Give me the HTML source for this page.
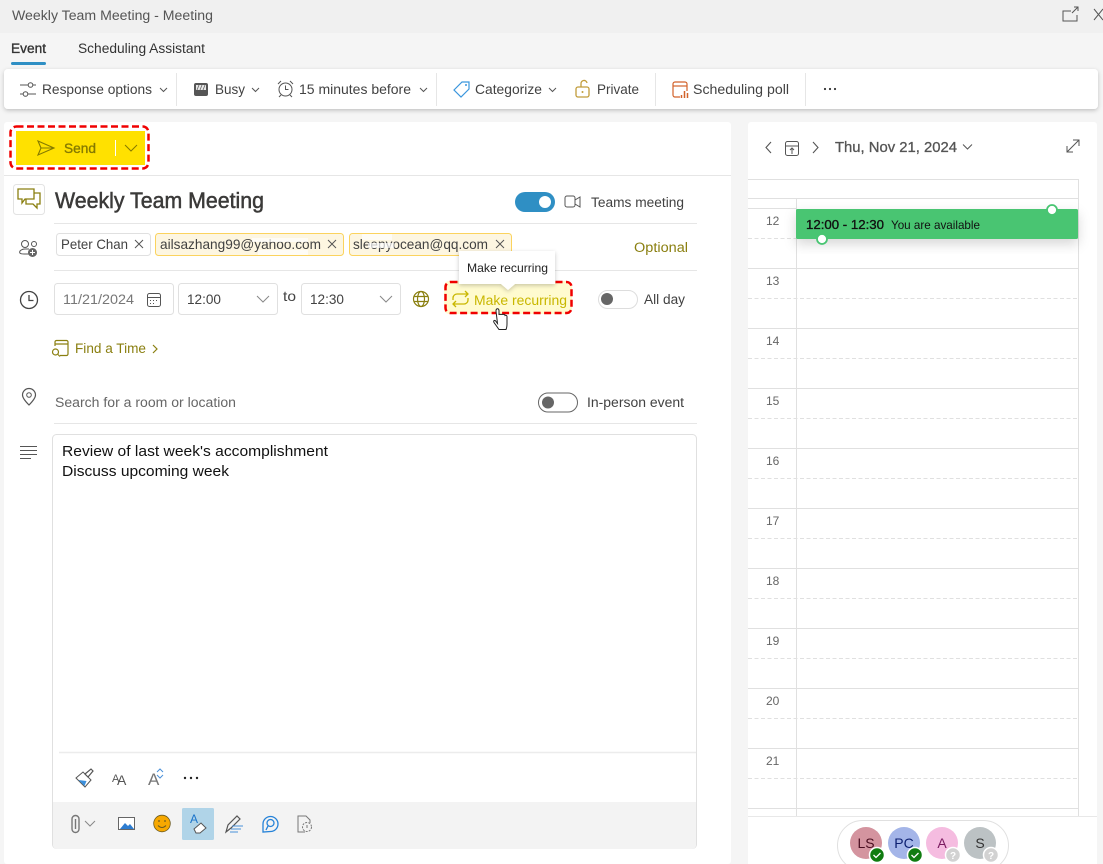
<!DOCTYPE html>
<html><head><meta charset="utf-8"><title>Weekly Team Meeting - Meeting</title>
<style>
html,body{margin:0;padding:0;background:#f5f5f5;width:1103px;height:864px;overflow:hidden}
svg{display:block}
text{font-family:"Liberation Sans",sans-serif;font-size:14px;fill:#424242;white-space:pre}
.i{fill:none;stroke:#555;stroke-width:1}
.o{fill:none;stroke:#8a7f10;stroke-width:1.200}
.l{stroke:#e6e6e6;stroke-width:1;fill:none}
.g{stroke:#e0e0e0;stroke-width:1;fill:#fff}
</style></head><body>
<svg width="1103" height="864" viewBox="0 0 1103 864" xmlns="http://www.w3.org/2000/svg">
<defs>
<filter id="s" x="-5%" y="-20%" width="110%" height="150%"><feDropShadow dx="0" dy="1.500" stdDeviation="2" flood-color="#000" flood-opacity=".22"/></filter>
<filter id="e" x="-5%" y="-30%" width="110%" height="180%"><feDropShadow dx="0" dy="5" stdDeviation="6" flood-color="#000" flood-opacity=".16"/></filter>
</defs>
<rect width="1103" height="864" fill="#f5f5f5"/>
<rect width="1103" height="33" fill="#f0f0f0"/>
<text x="12" y="20" textLength="201" lengthAdjust="spacingAndGlyphs" style="font-size:13.5px;fill:#555">Weekly Team Meeting - Meeting</text>
<path class="i" d="M1071 11h-8v10h14v-6M1072 13l6-6M1074 7h4v4"/>
<path class="i" d="M1094 9l9 11M1103 9l-9 11"/>

<text x="11" y="53" textLength="35" lengthAdjust="spacingAndGlyphs" style="font-size:13.5px;fill:#333;stroke:#333;stroke-width:.35px">Event</text>
<rect x="11" y="62" width="35" height="3" rx="1.500" fill="#2f8fc4"/>
<text x="78" y="53" textLength="127" lengthAdjust="spacingAndGlyphs" style="font-size:13.5px;fill:#333">Scheduling Assistant</text>

<!-- toolbar -->
<rect x="4" y="69" width="1094" height="40" rx="4" fill="#fff" filter="url(#s)"/>
<path class="i" d="M20 85h8M33 85h3M20 94h3M28 94h8"/><circle class="i" cx="30.500" cy="85" r="2.300"/><circle class="i" cx="25.500" cy="94" r="2.300"/>
<text x="42" y="94" textLength="110" lengthAdjust="spacingAndGlyphs">Response options</text>
<path class="i" d="M160 88l3.500 3.500L167 88" stroke="#888"/>
<path class="l" d="M176.500 73v33M436.500 73v33M655.500 73v33M805.500 73v33"/>
<rect x="194" y="83" width="14" height="13" rx="2" fill="#555"/><rect x="196" y="85" width="10" height="5" fill="#e8e8e8"/><path stroke="#666" stroke-width=".8" d="M197 90l2-5M200 90l2-5M203 90l2-5"/>
<text x="215" y="94" textLength="30" lengthAdjust="spacingAndGlyphs">Busy</text>
<path class="i" d="M252 88l3.500 3.500L259 88"/>
<circle class="i" cx="285.500" cy="89.500" r="6.500"/><path class="i" d="M285.500 85.500v4h3M278 84l3-3M293 84l-3-3M281 95l-2 2M290 95l2 2"/>
<text x="299" y="94" textLength="112" lengthAdjust="spacingAndGlyphs">15 minutes before</text>
<path class="i" d="M420 88l3.500 3.500L427 88"/>
<path fill="none" stroke="#3a96dd" stroke-width="1.200" d="M454 90l8-8h7v7l-8 8z"/><circle cx="466" cy="85" r="1" fill="#3a96dd"/>
<text x="475" y="94" textLength="67" lengthAdjust="spacingAndGlyphs">Categorize</text>
<path class="i" d="M549 88l3.500 3.500L556 88"/>
<rect x="576" y="87" width="13" height="10" rx="2" fill="none" stroke="#c19c3a" stroke-width="1.300"/><path fill="none" stroke="#c19c3a" stroke-width="1.300" d="M581 87v-3a3 3 0 0 1 6-1"/><circle cx="582.500" cy="92" r="1" fill="#c19c3a"/>
<text x="597" y="94" textLength="42" lengthAdjust="spacingAndGlyphs">Private</text>
<rect x="673" y="82" width="14" height="15" rx="2" fill="none" stroke="#d2622a" stroke-width="1.200"/><path stroke="#d2622a" stroke-width="1.200" d="M673 86h14"/>
<rect x="680" y="91" width="9" height="7" fill="#fff"/><path stroke="#d2622a" stroke-width="1.500" d="M681.500 98v-3M684.500 98v-7M687.500 98v-5"/>
<text x="693" y="94" textLength="96" lengthAdjust="spacingAndGlyphs">Scheduling poll</text>
<circle cx="825" cy="89" r="1.100" fill="#333"/><circle cx="830" cy="89" r="1.100" fill="#333"/><circle cx="835" cy="89" r="1.100" fill="#333"/>

<!-- left card -->
<rect x="4" y="122" width="727" height="742" rx="3" fill="#fff"/>
<rect x="16" y="131" width="129" height="34" fill="#ffe100"/>
<rect x="10.500" y="126.500" width="138" height="42" rx="6" fill="none" stroke="#f00000" stroke-width="2.500" stroke-dasharray="7 3.500"/>
<path fill="none" stroke="#857a00" stroke-width="1.100" d="M38 141l16 7-16 7 3-7zM41 148h13"/>
<text x="64" y="153" textLength="32" lengthAdjust="spacingAndGlyphs" style="fill:#857a00;font-size:13.5px;stroke:#857a00;stroke-width:.35px">Send</text>
<path stroke="#fff" stroke-width="1" d="M115.500 140v16"/>
<path fill="none" stroke="#857a00" d="M125 145l6 6 6-6"/>
<path class="l" d="M4 175.500h727"/>

<rect x="13.500" y="184.500" width="31" height="30" rx="3" fill="#fff" stroke="#e3e3e3"/>
<path fill="none" stroke="#8a7f10" stroke-width="1.300" d="M18 189h16v10h-9l-3 4v-4h-4zM34 193h6v11h-3v4l-4-4h-7v-5"/>
<text x="55" y="208" textLength="209" lengthAdjust="spacingAndGlyphs" style="font-size:22px;fill:#3b3a39;stroke:#3b3a39;stroke-width:.5px">Weekly Team Meeting</text>
<rect x="515" y="192" width="40" height="20" rx="10" fill="#2f8fc4"/><circle cx="545" cy="202" r="6" fill="#fff"/>
<rect x="565" y="196" width="10" height="11" rx="2" class="i"/><path class="i" d="M575 200l5-3v10l-5-3"/>
<text x="591" y="207" textLength="93" lengthAdjust="spacingAndGlyphs" style="font-size:13.5px">Teams meeting</text>
<path class="l" d="M54 223.500h643M54 270.500h643"/>

<!-- attendees -->
<circle class="i" cx="25" cy="244" r="3.500" stroke="#777"/><circle class="i" cx="34" cy="244" r="2.500" stroke="#777"/><path class="i" d="M32 254h-8c-4 0-5-1-4-3 1-1 2-2 5-2h4"/><circle cx="32.500" cy="252.500" r="4.500" fill="#666"/><path stroke="#fff" d="M30 252.500h5M32.500 250v5"/>
<rect x="56.500" y="233.500" width="94" height="22" rx="3" class="g"/>
<text x="61" y="249" textLength="67" lengthAdjust="spacingAndGlyphs">Peter Chan</text>
<path class="i" d="M135 240l8 8M143 240l-8 8"/>
<rect x="155.500" y="233.500" width="188" height="22" rx="3" fill="#fdf6e1" stroke="#fbd35e"/>
<text x="160" y="249" textLength="161" lengthAdjust="spacingAndGlyphs">ailsazhang99@yahoo.com</text>
<path class="i" d="M328 240l8 8M336 240l-8 8"/>
<rect x="349.500" y="233.500" width="162" height="22" rx="3" fill="#fdf6e1" stroke="#fbd35e"/>
<text x="353" y="249" textLength="135" lengthAdjust="spacingAndGlyphs">sleepyocean@qq.com</text>
<path class="i" d="M496 240l8 8M504 240l-8 8"/>
<g fill="#fff" opacity=".7"><rect x="252" y="238" width="56" height="4"/><rect x="258" y="250" width="50" height="5"/><rect x="362" y="234" width="30" height="6"/><rect x="368" y="243" width="26" height="5"/></g>
<text x="634" y="252" textLength="54" lengthAdjust="spacingAndGlyphs" style="fill:#8a7f10;font-size:13.5px">Optional</text>

<!-- date row -->
<circle cx="29" cy="300" r="8.500" fill="none" stroke="#444" stroke-width="1.300"/><path fill="none" stroke="#444" stroke-width="1.300" d="M29 295v5.500h4.500"/>
<rect x="54.500" y="283.500" width="119" height="31" rx="3" class="g"/>
<text x="63" y="304" textLength="71" lengthAdjust="spacingAndGlyphs" style="fill:#777">11/21/2024</text>
<rect x="147.500" y="293.500" width="13" height="13" rx="2" class="i"/><path class="i" d="M148 297.500h12"/><path stroke="#555" stroke-dasharray="1 2" d="M150 300.500h9M150 303.500h6"/>
<rect x="178.500" y="283.500" width="99" height="31" rx="3" class="g"/>
<text x="187" y="304" textLength="34" lengthAdjust="spacingAndGlyphs">12:00</text>
<path d="M257 296l6 6 6-6" fill="none" stroke="#888"/>
<text x="283" y="301" textLength="13" lengthAdjust="spacingAndGlyphs">to</text>
<rect x="301.500" y="283.500" width="99" height="31" rx="3" class="g"/>
<text x="310" y="304" textLength="34" lengthAdjust="spacingAndGlyphs">12:30</text>
<path d="M380 296l6 6 6-6" fill="none" stroke="#888"/>
<circle class="o" cx="421" cy="299" r="7.500"/><ellipse class="o" cx="421" cy="299" rx="3.500" ry="7.500"/><path class="o" d="M414 296.500h14M414 301.500h14"/>

<!-- tooltip + make recurring -->
<rect x="444" y="281" width="128" height="33" rx="5" fill="#fffbcf"/>
<rect x="445.500" y="282" width="126" height="31" rx="5" fill="none" stroke="#f00000" stroke-width="2.500" stroke-dasharray="7 3.500"/>
<path fill="none" stroke="#c9b700" stroke-width="1.300" d="M453 300v-2a4 4 0 0 1 4-4h11M465 291l3 3-3 3M468 298v2a4 4 0 0 1-4 4h-11M456 301l-3 3 3 3"/>
<text x="474" y="305" textLength="93" lengthAdjust="spacingAndGlyphs" style="fill:#c9b700;font-size:13.5px">Make recurring</text>
<g filter="url(#s)"><path fill="#fff" d="M459 251h96v33h-40l-7 6-7-6h-42z"/></g>
<text x="467" y="272" textLength="81" lengthAdjust="spacingAndGlyphs" style="font-size:12px;fill:#222">Make recurring</text>
<path fill="#fff" stroke="#222" stroke-width="1" d="M496 311c0-3 3-3 3 0v4c0-1 2-1 2 0 0-1 2-1 2 0 0-1 2-1 2 .5 1-.5 2 0 2 1v7c0 4-1 6-1 6h-7l-5-7c-1-2 1-3 2-1l1.500 2z"/>
<rect x="598.500" y="290.500" width="39" height="18" rx="9" fill="#fff" stroke="#ddd"/><circle cx="607" cy="299" r="6" fill="#666"/>
<text x="644" y="304" textLength="41" lengthAdjust="spacingAndGlyphs" style="font-size:13.5px">All day</text>

<!-- find a time -->
<path class="o" d="M55 346v-4a1.500 1.500 0 0 1 1.500-1.500h10a1.500 1.500 0 0 1 1.500 1.500v12a1.500 1.500 0 0 1-1.500 1.500H60M55 344h13"/><circle class="o" cx="55.500" cy="352" r="3"/><path class="o" d="M58 354.500l2 2"/>
<text x="75" y="353" textLength="71" lengthAdjust="spacingAndGlyphs" style="fill:#8a7f10;font-size:13.5px">Find a Time</text>
<path class="o" d="M153 345l4 4-4 4"/>

<!-- location -->
<path fill="none" stroke="#555" stroke-width="1.200" d="M29 405c-4-4-6.500-7-6.500-10a6.500 6.500 0 0 1 13 0c0 3-2.500 6-6.500 10z"/><circle class="i" cx="29" cy="395" r="2.300"/>
<text x="55" y="407" textLength="181" lengthAdjust="spacingAndGlyphs" style="fill:#666;font-size:13.5px">Search for a room or location</text>
<rect x="538.500" y="393" width="39" height="19" rx="9.500" fill="#fff" stroke="#666"/><circle cx="548" cy="402.500" r="6" fill="#666"/>
<text x="587" y="407" textLength="97" lengthAdjust="spacingAndGlyphs" style="font-size:13.5px">In-person event</text>
<path class="l" d="M54 423.500h643"/>

<!-- body -->
<path class="i" d="M20 446.500h17M20 450.500h17M20 454.500h17M20 458.500h11" stroke="#777" />
<rect x="52.500" y="434.500" width="644" height="414" rx="4" fill="#fff" stroke="#e0e0e0"/>
<text x="62" y="456" textLength="266" lengthAdjust="spacingAndGlyphs" style="fill:#111;font-size:15px">Review of last week's accomplishment</text>
<text x="62" y="476" textLength="167" lengthAdjust="spacingAndGlyphs" style="fill:#111;font-size:15px">Discuss upcoming week</text>
<path stroke="#ececec" stroke-width="1.500" d="M59 752.500h637"/>
<path d="M53 802h643v43a4 4 0 0 1-4 4H57a4 4 0 0 1-4-4z" fill="#f3f3f3"/>

<!-- format icons -->
<path fill="#fff" stroke="#555" d="M76 778l7-6 8 8-6 7z"/><path fill="#3a8fdc" d="M78.500 780l8 1-2 5z"/><path fill="#fff" stroke="#555" stroke-width="1.200" d="M85 774l6-5 2 2-5 6z"/>
<text x="112" y="782" style="font-size:11px;fill:#555">A</text><text x="117" y="785" style="font-size:14px;fill:#555">A</text>
<text x="148" y="785" style="font-size:17px;fill:#777">A</text>
<path fill="none" stroke="#4a90d9" d="M157 772l3-3 3 3M157 775l3 3 3-3"/>
<circle cx="185" cy="778" r="1.200" fill="#222"/><circle cx="191" cy="778" r="1.200" fill="#222"/><circle cx="197" cy="778" r="1.200" fill="#222"/>

<!-- bottom icons -->
<path fill="none" stroke="#777" stroke-width="1.400" d="M72 819a3.500 3.500 0 0 1 7 0v10a3.500 3.500 0 0 1-7 0zM75.500 819v10"/>
<path fill="none" stroke="#888" d="M85 821l5 5 5-5"/>
<rect x="118.500" y="817.500" width="16" height="12" fill="#fff" stroke="#666"/><path fill="#2d7cd0" d="M120 829l5-6 3 3 2-2 4 5z"/>
<circle cx="162" cy="823.500" r="8.300" fill="#f7a800" stroke="#6b5a20" stroke-width=".8"/><circle cx="159" cy="821" r=".9" fill="#6b5a20"/><circle cx="165" cy="821" r=".9" fill="#6b5a20"/><path fill="none" stroke="#6b5a20" d="M158 825.500q4 4 8 0"/>
<rect x="182" y="808" width="32" height="32" rx="1.500" fill="#b0d4e8"/>
<text x="190" y="823" style="font-size:12px;fill:#1a73c9">A</text>
<path fill="#fff" stroke="#555" d="M194 829l7-6 5 5-6 5h-4z"/>
<path fill="none" stroke="#555" stroke-width="1.200" d="M226 832l2-7 9-9 3 3-9 9z"/><path stroke="#4a90d9" d="M232 826h11M231 829h10M230 832h8"/>
<path fill="none" stroke="#2582d8" stroke-width="1.300" d="M263 832v-8a7.500 7.500 0 1 1 7.500 7.500z"/><circle fill="none" stroke="#2582d8" stroke-width="1.300" cx="270.500" cy="823" r="3.500"/><path stroke="#2582d8" stroke-width="1.300" d="M268 826l-2 4"/>
<path fill="none" stroke="#777" d="M305 832h-7v-16h8l4 4v3"/><circle fill="none" stroke="#777" stroke-dasharray="2 1.200" cx="307" cy="827" r="4.500"/><path stroke="#777" d="M307 825v3"/>

<!-- calendar panel -->
<rect x="748" y="122" width="349" height="742" rx="3" fill="#fff"/>
<path fill="none" stroke="#555" stroke-width="1.100" d="M771 142l-5 5.500 5 5.500M813 142l5 5.500-5 5.500"/>
<rect x="785.500" y="141.500" width="13" height="14" rx="2" class="i"/><path class="i" d="M786 146h12M792 148v6M790 150l2-2 2 2"/>
<text x="835" y="152" textLength="122" lengthAdjust="spacingAndGlyphs" style="font-size:14.5px;fill:#555;stroke:#555;stroke-width:.3px">Thu, Nov 21, 2024</text>
<path class="i" d="M963 144.500l4.500 4.500 4.500-4.500"/>
<path class="i" d="M1067 152l12-12M1073 140h6v6M1067 146v6h6"/>

<g fill="none" stroke="#e0e0e0" stroke-width="1">
<path d="M748 179.500h331M748 198.500h331M1078.500 179v638M796.500 198.500V817"/>
<path d="M748 208.500h48M748 268.500h331M748 328.500h331M748 388.500h331M748 448.500h331M748 508.500h331M748 568.500h331M748 628.500h331M748 688.500h331M748 748.500h331M748 808.500h331"/>
<path stroke-dasharray="4 2.500" d="M748 238.500h48M748 298.500h331M748 358.500h331M748 418.500h331M748 478.500h331M748 538.500h331M748 598.500h331M748 658.500h331M748 718.500h331M748 778.500h331"/>
</g>
<g>
<text x="766" y="225" style="font-size:12px;fill:#666">12</text><text x="766" y="285" style="font-size:12px;fill:#666">13</text><text x="766" y="345" style="font-size:12px;fill:#666">14</text><text x="766" y="405" style="font-size:12px;fill:#666">15</text><text x="766" y="465" style="font-size:12px;fill:#666">16</text><text x="766" y="525" style="font-size:12px;fill:#666">17</text><text x="766" y="585" style="font-size:12px;fill:#666">18</text><text x="766" y="645" style="font-size:12px;fill:#666">19</text><text x="766" y="705" style="font-size:12px;fill:#666">20</text><text x="766" y="765" style="font-size:12px;fill:#666">21</text>
</g>
<rect x="796" y="209" width="282" height="30" rx="1.500" fill="#48c572" filter="url(#e)"/>
<text x="806" y="229" textLength="78" lengthAdjust="spacingAndGlyphs" style="font-size:13px;fill:#111;stroke:#111;stroke-width:.35px">12:00 - 12:30</text>
<text x="891" y="229" textLength="89" lengthAdjust="spacingAndGlyphs" style="font-size:12px;fill:#111">You are available</text>
<circle cx="1052" cy="210" r="5" fill="#fff" stroke="#48c572" stroke-width="1.800"/>
<circle cx="822" cy="239" r="5" fill="#fff" stroke="#48c572" stroke-width="1.800"/>

<!-- people -->
<rect x="748" y="817" width="349" height="47" fill="#fff"/>
<path stroke="#e8e8e8" d="M748 816.500h349"/>
<rect x="837.500" y="820.500" width="171" height="50" rx="25" fill="#fff" stroke="#e0e0e0"/>
<circle cx="866" cy="843" r="16" fill="#d4949f"/><circle cx="904" cy="843" r="16" fill="#a4b5e8"/><circle cx="942" cy="843" r="16" fill="#f5bce0"/><circle cx="980" cy="843" r="16" fill="#bcc2c4"/>
<text x="866" y="848" text-anchor="middle" style="font-size:14px;fill:#4a0e20">LS</text>
<text x="904" y="848" text-anchor="middle" style="font-size:14px;fill:#0c1f70">PC</text>
<text x="942" y="848" text-anchor="middle" style="font-size:14px;fill:#7a1a60">A</text>
<text x="980" y="848" text-anchor="middle" style="font-size:14px;fill:#333">S</text>
<g stroke="#fff" stroke-width="1.500"><circle cx="877" cy="855" r="7.500" fill="#107c10"/><circle cx="915" cy="855" r="7.500" fill="#107c10"/><circle cx="953" cy="855" r="7.500" fill="#d2d2d2"/><circle cx="991" cy="855" r="7.500" fill="#d2d2d2"/></g>
<path fill="none" stroke="#fff" stroke-width="1.300" d="M873.500 855l2.500 2.500 4.500-4.500M911.500 855l2.500 2.500 4.500-4.500"/>
<text x="953" y="859" text-anchor="middle" style="font-size:10px;font-weight:bold;fill:#fff">?</text>
<text x="991" y="859" text-anchor="middle" style="font-size:10px;font-weight:bold;fill:#fff">?</text>
</svg>
</body></html>
